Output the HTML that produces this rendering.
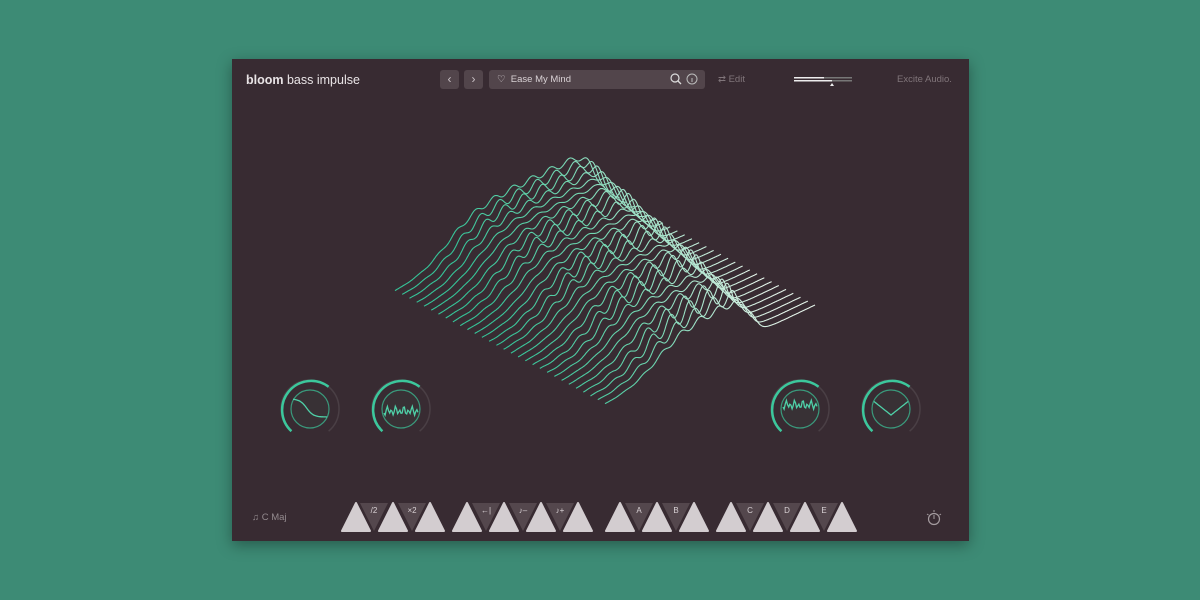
<!DOCTYPE html>
<html><head><meta charset="utf-8"><style>
body{margin:0;width:1200px;height:600px;background:#3d8b75;overflow:hidden;font-family:"Liberation Sans",sans-serif}
#p{position:absolute;left:232px;top:59px;width:737px;height:482px;background:#382b32;box-shadow:0 4px 14px rgba(0,0,0,.35)}
.t{position:absolute;color:#e9e4e6}
.btn{position:absolute;top:11px;width:19px;height:19px;background:#52454b;border-radius:3px;color:#c9c1c5;font-size:12px;text-align:center;line-height:19px}
</style></head><body>
<div id="p">
<div class="t" style="left:14px;top:14px;font-size:12.5px"><b>bloom</b> bass impulse</div>
<div class="btn" style="left:208px">&lsaquo;</div>
<div class="btn" style="left:232px">&rsaquo;</div>
<div style="position:absolute;left:257px;top:11px;width:216px;height:19px;background:#52454b;border-radius:3px"></div>
<div class="t" style="left:265px;top:15px;font-size:9.5px;color:#d9d2d5">♡&nbsp; Ease My Mind</div>
<svg style="position:absolute;left:438px;top:14px" width="34" height="14"><circle cx="5" cy="5" r="4" fill="none" stroke="#ddd" stroke-width="1.2"/><line x1="8" y1="8" x2="11" y2="11" stroke="#ddd" stroke-width="1.3"/><circle cx="22" cy="6" r="5" fill="none" stroke="#bbb"/><line x1="22" y1="5" x2="22" y2="9" stroke="#bbb"/></svg>
<div class="t" style="left:486px;top:15px;font-size:9.5px;color:#80757a">⇄ Edit</div>
<svg style="position:absolute;left:562px;top:16px" width="60" height="12"><rect x="0" y="2" width="30" height="1.5" fill="#eee"/><rect x="0" y="5" width="38" height="1.5" fill="#eee"/><rect x="30" y="2" width="28" height="1.5" fill="#777"/><rect x="38" y="5" width="20" height="1.5" fill="#777"/><path d="M36 11l2-3 2 3z" fill="#eee"/></svg>
<div class="t" style="left:665px;top:15px;font-size:9.5px;color:#80757a">Excite Audio.</div>
<svg id="w" style="position:absolute;left:-232px;top:-59px" width="1200" height="600"></svg>
<div class="t" style="left:20px;top:453px;font-size:9.5px;color:#938a8e">♫ C Maj</div>
<svg style="position:absolute;left:693px;top:450px" width="18" height="18"><circle cx="9" cy="10" r="5.5" fill="none" stroke="#a59ca0" stroke-width="1.2"/><line x1="9" y1="6" x2="9" y2="10" stroke="#a59ca0"/><path d="M9 1v2M2 5l1.5 1M16 5l-1.5 1" stroke="#a59ca0"/></svg>
</div>
<svg id="k" style="position:absolute;left:0;top:0" width="1200" height="600"></svg>
<script>
var w=document.getElementById('w'),h='';
h+='<defs><linearGradient id="g" gradientUnits="userSpaceOnUse" x1="500" y1="330" x2="720" y2="210"><stop offset="0" stop-color="#35c498"/><stop offset=".5" stop-color="#6fd6b0"/><stop offset="1" stop-color="#e4f4ea"/></linearGradient></defs>';
for(var i=0;i<30;i++){var s=i/29,fx=395+s*210,fy=292+s*113,d='',td=0.95-0.25*s;
for(var k=0;k<=220;k++){var t=k/220,bx=fx+t*210,by=fy-t*100;
var r=1/(1+Math.exp(-(t-0.25)*14)),f=1/(1+Math.exp((t-td)*45));
var hh=(42+6*(1-s))*r*f+(5+3*Math.sin(i))*Math.sin(t*70+i*0.7)*r*f*(0.6+0.6*s);
d+=(k?'L':'M')+bx.toFixed(1)+' '+(by-hh).toFixed(1);}
h+='<path d="'+d+'" fill="none" stroke="url(#g)" stroke-width="1.1"/>';}
w.innerHTML=h;
var K=document.getElementById('k'),q='';
function arc(cx,cy,r,a0,a1){var p=function(a){a=a*Math.PI/180;return (cx+r*Math.sin(a)).toFixed(1)+' '+(cy-r*Math.cos(a)).toFixed(1)};return 'M'+p(a0)+'A'+r+' '+r+' 0 '+((a1-a0)>180?1:0)+' 1 '+p(a1);}
[[310,409,0],[401,409,1],[800,409,2],[891,409,3]].forEach(function(c){var x=c[0],y=c[1];
q+='<path d="'+arc(x,y,29,-140,140)+'" fill="none" stroke="#4a3f45" stroke-width="1.5"/>';
q+='<path d="'+arc(x,y,29,-140,40)+'" fill="none" stroke="#3cc79c" stroke-width="2.5"/>';
q+='<circle cx="'+x+'" cy="'+y+'" r="19" fill="#3a3c3a" fill-opacity=".4" stroke="#3a9a7c" stroke-width="1.2"/>';
var d='';for(var k=0;k<=30;k++){var xx=x-17+k*34/30,yy;
if(c[2]==0)yy=y-10+18*(1/(1+Math.exp(-(k-12)/3)));else if(c[2]==3)yy=y-8+Math.abs(k-15)*-0.9+14;else yy=y+(c[2]==1?2:-4)+Math.sin(k*1.7)*3+Math.cos(k*0.9)*2;
d+=(k?'L':'M')+xx.toFixed(1)+' '+yy.toFixed(1);}
q+='<path d="'+d+'" fill="none" stroke="#4fd1a8" stroke-width="1.3"/>';});
var up=[356,393,430,467,504,541,578,620,657,694,731,768,805,842],dn=[[374,'/2'],[412,'×2'],[486,'←|'],[523,'♪–'],[560,'♪+'],[639,'A'],[676,'B'],[750,'C'],[787,'D'],[824,'E']];
dn.forEach(function(a){var x=a[0];q+='<path d="M'+(x-14)+' 503L'+(x+14)+' 503L'+x+' 531Z" fill="#54474d"/><text x="'+x+'" y="513" font-size="8" fill="#d9d2d5" text-anchor="middle" font-family="Liberation Sans">'+a[1]+'</text>';});
up.forEach(function(x){q+='<path d="M'+(x-14)+' 531L'+(x+14)+' 531L'+x+' 503Z" fill="#d3cdd0" stroke="#d3cdd0" stroke-linejoin="round" stroke-width="2"/>';});
K.innerHTML=q;
</script>
</body></html>
